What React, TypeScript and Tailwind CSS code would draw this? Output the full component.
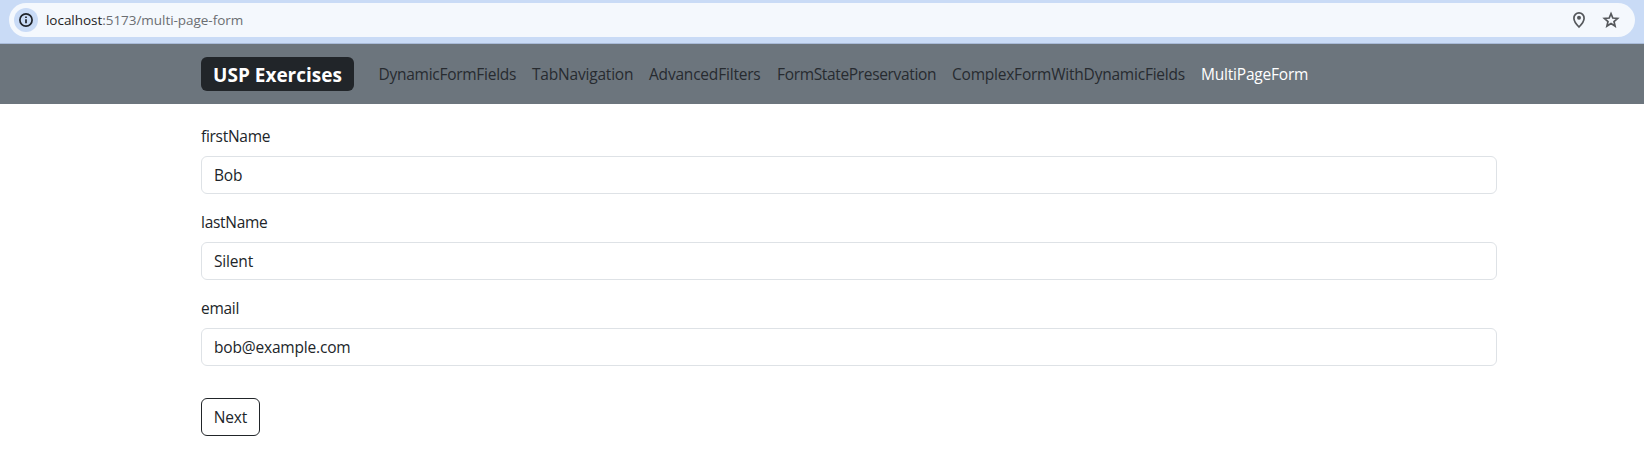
import type { ReactNode } from "react";

const links = [
  { label: "DynamicFormFields", box: "w-[153.5px] tracking-[-0.27px]" },
  { label: "TabNavigation", box: "w-[117px] tracking-[-0.2px]" },
  { label: "AdvancedFilters", box: "w-[128px] tracking-[-0.2px]" },
  { label: "FormStatePreservation", box: "w-[175px] tracking-[-0.34px]" },
  { label: "ComplexFormWithDynamicFields", box: "w-[249px] tracking-[-0.22px]" },
  { label: "MultiPageForm", box: "w-[124px] tracking-[-0.2px]", active: true },
];

const fields = [
  { name: "firstName", value: "Bob" },
  { name: "lastName", value: "Silent" },
  { name: "email", value: "bob@example.com" },
];

function Icon({ children }: { children: ReactNode }) {
  return (
    <svg width="20" height="20" viewBox="0 0 20 20" fill="none" stroke="currentColor" strokeWidth="1.7">
      {children}
    </svg>
  );
}

function AddressBar() {
  return (
    <header className="flex h-11 items-start border-b border-[#a9bbd9] bg-[#c9dbf6] px-[9px] pt-[3px]">
      <div className="flex h-[34px] w-full items-center rounded-full bg-[#f4f8fd] pl-[5px] pr-[14px]">
        <span className="flex size-6 items-center justify-center rounded-full bg-[#c9dbf6] text-[#1f2329]">
          <Icon>
            <circle cx="10" cy="10" r="6.1" />
            <path d="M10 9.2v4.1M10 6.4v1.6" />
          </Icon>
        </span>
        <span className="ml-2 text-[13.5px] leading-5 tracking-[-0.04px] text-[#6b6e72]">
          <span className="text-[#1f1f1f]">localhost</span>:5173/multi-page-form
        </span>
        <div className="ml-auto flex items-center gap-3 text-[#55585c]">
          <Icon>
            <path d="M10 17C6.6 13.7 4.9 11 4.9 8.3a5.1 5.5 0 0 1 10.2 0C15.1 11 13.4 13.7 10 17Z" />
            <circle cx="10" cy="7.8" r="2" fill="currentColor" stroke="none" />
          </Icon>
          <Icon>
            <path
              d="M10 3.7l1.8 4.3 4.8.4-3.6 3.1 1.1 4.6L10 13.6l-4.1 2.500 1.100-4.600-3.600-3.100 4.800-.4Z"
              strokeWidth="1.700"
            />
          </Icon>
        </div>
      </div>
    </header>
  );
}

function Navbar() {
  return (
    <nav className="flex h-15 items-center bg-[#6c757d] pl-[201px]">
      <a className="flex h-[34px] w-[153px] items-center justify-center whitespace-nowrap rounded-md bg-[#212529] pt-[2px] text-[19px] font-bold tracking-normal text-white">
        USP Exercises
      </a>
      <div className="ml-[24.5px] flex">
        {links.map((l) => (
          <a
            key={l.label}
            className={`${l.box} whitespace-nowrap leading-6 ${l.active ? "text-white" : "text-[#272b30]"}`}
          >
            {l.label}
          </a>
        ))}
      </div>
    </nav>
  );
}

export default function App() {
  return (
    <div className="min-h-[468px] bg-white font-['Open_Sans','Noto_Sans',sans-serif] text-[15.5px] tracking-[-0.2px] text-[#212529]">
      <AddressBar />
      <Navbar />
      <form className="pl-[201px] pr-[147px] pt-5">
        {fields.map((f) => (
          <div key={f.name} className="mb-4">
            <label htmlFor={f.name} className="mb-2 block leading-6 tracking-[-0.28px]">
              {f.name}
            </label>
            <input
              id={f.name}
              defaultValue={f.value}
              className="block h-[38px] w-full rounded-md border border-[#dee2e6] px-3 tracking-[-0.18px]"
            />
          </div>
        ))}
        <button
          type="button"
          className="mt-8 flex h-[38px] w-[59px] items-center justify-center rounded-md border border-[#212529] pt-px tracking-[-0.1px]"
        >
          Next
        </button>
      </form>
    </div>
  );
}
